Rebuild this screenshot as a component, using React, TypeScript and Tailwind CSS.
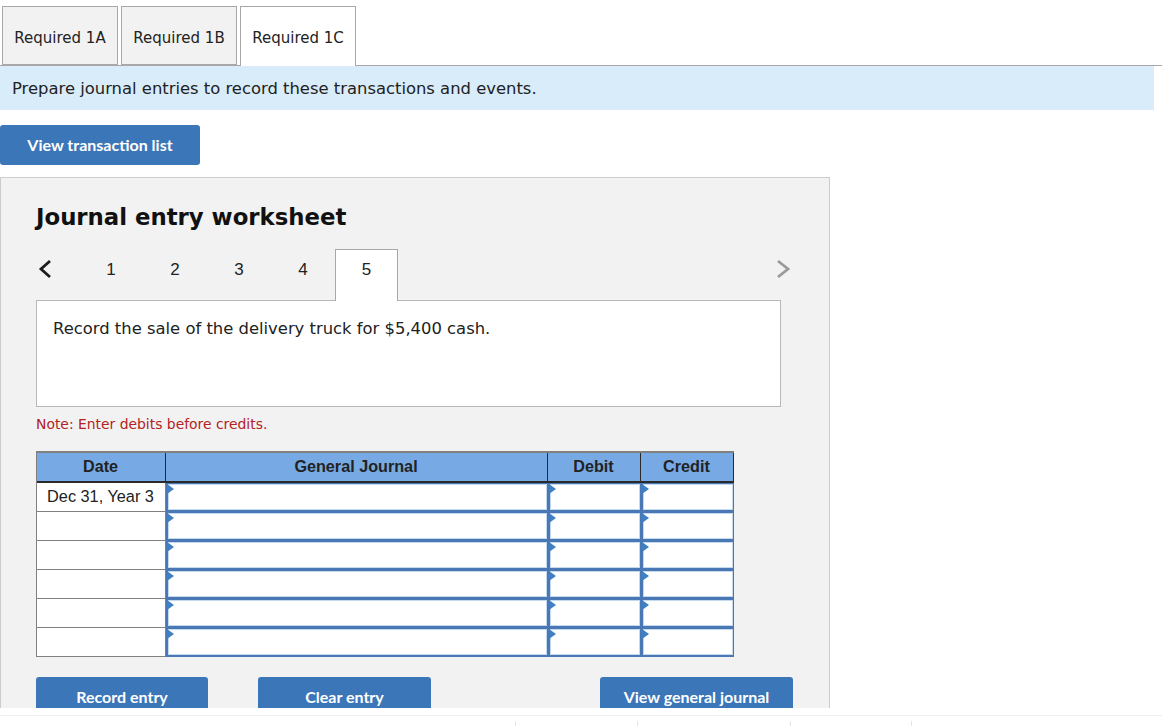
const verdana = "font-['DejaVu_Sans',sans-serif]";

function Tab({ label, active }: { label: string; active?: boolean }) {
  return (
    <div
      className={`flex w-[116px] items-center justify-center border border-[#a8a8a8] text-[15px] text-[#222] ${verdana} ${
        active ? "z-10 mb-[-1px] h-[60px] border-b-0 bg-white pt-[3px]" : "h-[59px] bg-[#f2f2f2] pt-[6px]"
      }`}
    >
      {label}
    </div>
  );
}

function EntryCell() {
  return (
    <div className="relative h-[29px] border-b-2 border-l-2 border-r border-t border-[#4a78b5] bg-white shadow-[inset_0_0_0_1px_#c4d8ee]">
      <div className="absolute left-[-1px] top-[0px] h-0 w-0 border-y-[5px] border-l-[7px] border-y-transparent border-l-[#3f7fc4]" />
    </div>
  );
}

function DateCell({ text }: { text?: string }) {
  return (
    <div className="flex h-[29px] items-center justify-center border-b border-r border-[#808080] bg-white pb-[1px] pr-[1px] font-['Liberation_Sans',sans-serif] text-[16.3px] text-[#222]">
      {text}
    </div>
  );
}

function Head({ label }: { label: string }) {
  return (
    <div className="flex h-[30px] items-center justify-center border-b-2 border-r border-[#2a2a2a] bg-[#77aae4] pb-[1px] pr-[1px] font-['Liberation_Sans',sans-serif] text-[16.2px] font-bold text-[#222]">
      {label}
    </div>
  );
}

function Btn({ label, className }: { label: string; className: string }) {
  return (
    <div
      className={`flex h-[40px] items-center justify-center rounded-[3px] bg-[#3b76b9] font-['Lato',sans-serif] text-[16px] font-bold text-white ${className}`}
    >
      {label}
    </div>
  );
}

export default function App() {
  const rows = ["Dec 31, Year 3", "", "", "", "", ""];
  return (
    <div className="h-[726px] w-[1162px] overflow-hidden bg-white">
      <div className="h-[708px] overflow-hidden">
        <div className="flex h-[66px] items-end gap-[3px] border-b border-[#a8a8a8] pl-[2px] pr-[8px]">
          <Tab label="Required 1A" />
          <Tab label="Required 1B" />
          <Tab label="Required 1C" active />
        </div>
        <div className={`flex h-[44px] w-[1154px] items-center bg-[#d9ecfa] pl-[12px] pt-[3px] text-[16.4px] text-[#222] ${verdana}`}>
          Prepare journal entries to record these transactions and events.
        </div>
        <Btn label="View transaction list" className="mt-[15px] w-[200px]" />
        <div className="mt-[12px] h-[600px] w-[830px] border border-[#cccccc] bg-[#f2f2f2] pl-[35px]">
          <h1 className={`pt-[23px] text-[22.8px] font-bold leading-[32px] text-[#111] ${verdana}`}>
            Journal entry worksheet
          </h1>
          <div className="relative mt-[16px] flex h-[51px] w-[745px] items-stretch font-['Liberation_Sans',sans-serif] text-[17px] text-[#222]">
            <svg viewBox="0 0 16 20" className="mb-[11px] ml-[1px] mt-[10px] h-[20px] w-[16px]">
              <path d="M13 2 L4 10 L13 18" fill="none" stroke="#1c1c1c" strokeWidth="2.8" />
            </svg>
            <div className="ml-[26px] flex w-[64px] items-center justify-center pb-[10px]">1</div>
            <div className="flex w-[64px] items-center justify-center pb-[10px]">2</div>
            <div className="flex w-[64px] items-center justify-center pb-[10px]">3</div>
            <div className="flex w-[64px] items-center justify-center pb-[10px]">4</div>
            <div className="z-10 mb-[-1px] flex w-[63px] items-center justify-center border border-b-0 border-[#a8a8a8] bg-white pb-[12px]">
              5
            </div>
            <svg viewBox="0 0 16 20" className="mb-[11px] ml-auto mr-[-10px] mt-[10px] h-[20px] w-[16px]">
              <path d="M3 2 L13 10 L3 18" fill="none" stroke="#9a9a9a" strokeWidth="2.8" />
            </svg>
          </div>
          <div className={`h-[107px] w-[745px] border border-[#b8b8b8] bg-white px-[16px] pt-[18px] text-[16.4px] leading-[20px] text-[#222] ${verdana}`}>
            Record the sale of the delivery truck for $5,400 cash.
          </div>
          <p className={`mt-[8px] text-[13.9px] leading-[18px] text-[#b22222] ${verdana}`}>Note: Enter debits before credits.</p>
          <div className="mt-[18px] grid w-[698px] grid-cols-[129px_382px_93px_93px] border-l border-t-2 border-[#808080]">
            <Head label="Date" />
            <Head label="General Journal" />
            <Head label="Debit" />
            <Head label="Credit" />
            {rows.map((r, i) => (
              <div key={i} className="contents">
                <DateCell text={r} />
                <EntryCell />
                <EntryCell />
                <EntryCell />
              </div>
            ))}
          </div>
          <div className="mt-[20px] flex w-[757px]">
            <Btn label="Record entry" className="w-[172px]" />
            <Btn label="Clear entry" className="ml-[50px] w-[173px]" />
            <Btn label="View general journal" className="ml-auto w-[193px]" />
          </div>
        </div>
      </div>
      <div className="mt-[7px] flex h-[11px] border-t border-[#efefef] pt-[5px]">
        <div className="ml-[515px] h-[6px] w-px bg-[#e4e4e4]" />
        <div className="ml-[121px] h-[6px] w-px bg-[#e4e4e4]" />
        <div className="ml-[152px] h-[6px] w-px bg-[#e4e4e4]" />
        <div className="ml-[120px] h-[6px] w-px bg-[#e4e4e4]" />
      </div>
    </div>
  );
}
